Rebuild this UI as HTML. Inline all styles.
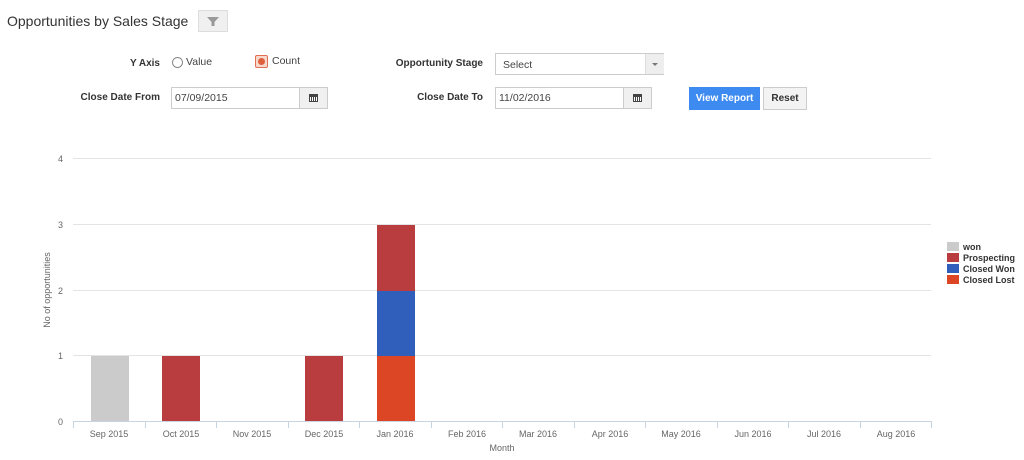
<!DOCTYPE html>
<html><head><style>
body{margin:0;width:1024px;height:460px;background:#fff;font-family:"Liberation Sans",sans-serif;position:relative;overflow:hidden}
.a{position:absolute}
.lbl{font-size:10px;font-weight:bold;color:#333;text-align:right;width:160px}
.inp{position:absolute;border:1px solid #ccc;box-sizing:border-box;height:22px;font-size:10.5px;color:#444;padding:4px 3px;background:#fff}
.cal{position:absolute;border:1px solid #ccc;box-sizing:border-box;height:22px;background:#f0f0f0;width:29px}
.cal:after{content:"";position:absolute;left:9px;top:6px;width:9px;height:8px;border:1px solid #444;border-top:3px solid #444;box-sizing:border-box;background:repeating-linear-gradient(90deg,#fff 0 1px,#444 1px 2px)}
</style></head><body>
<div class="a" style="left:7px;top:13px;font-size:14px;color:#333">Opportunities by Sales Stage</div>
<div class="a" style="left:198px;top:10px;width:30px;height:22px;background:#f0f0f0;border:1px solid #ddd;box-sizing:border-box">
<svg width="30" height="22" style="position:absolute;left:-1px;top:-1px"><path d="M9 7h12l-4.5 5v4h-3v-4z" fill="#999"/></svg></div>
<div class="a lbl" style="left:0;top:58px">Y Axis</div>
<div class="a" style="left:172px;top:57px;width:9px;height:9px;border:1px solid #888;border-radius:50%"></div>
<div class="a" style="left:186px;top:56px;font-size:10.5px;color:#444">Value</div>
<div class="a" style="left:255px;top:55px;width:13px;height:13px;background:#f6d8cc;border:1px solid #e07050;border-radius:2px;box-sizing:border-box"><div style="position:absolute;left:2px;top:2px;width:7px;height:7px;border-radius:50%;background:#e0603e"></div></div>
<div class="a" style="left:272px;top:55px;font-size:10.5px;color:#444">Count</div>
<div class="a lbl" style="left:323px;top:58px">Opportunity Stage</div>
<div class="inp" style="left:495px;top:53px;width:169px;height:22px;padding:5px 7px">Select</div>
<div class="a" style="left:645px;top:54px;width:18px;height:20px;background:#eee;border-left:1px solid #ddd"><div style="position:absolute;left:6px;top:9px;border:3px solid transparent;border-top:3px solid #777"></div></div>
<div class="a lbl" style="left:0;top:92px">Close Date From</div>
<div class="inp" style="left:171px;top:87px;width:130px">07/09/2015</div>
<div class="cal" style="left:299px;top:87px"></div>
<div class="a lbl" style="left:323px;top:92px">Close Date To</div>
<div class="inp" style="left:495px;top:87px;width:130px">11/02/2016</div>
<div class="cal" style="left:623px;top:87px"></div>
<div class="a" style="left:689px;top:87px;width:71px;height:23px;background:#3d8bf0;color:#fff;font-size:10px;font-weight:bold;text-align:center;line-height:23px">View Report</div>
<div class="a" style="left:763px;top:87px;width:44px;height:23px;background:#f3f3f3;border:1px solid #ccc;box-sizing:border-box;color:#333;font-size:10px;font-weight:bold;text-align:center;line-height:21px">Reset</div>
<svg class="a" style="left:0;top:0" width="1024" height="460" font-family="Liberation Sans,sans-serif">
<g stroke="#e4e4e4"><line x1="73" x2="931" y1="158.5" y2="158.5"/><line x1="73" x2="931" y1="224.5" y2="224.5"/><line x1="73" x2="931" y1="290.5" y2="290.5"/><line x1="73" x2="931" y1="355.5" y2="355.5"/></g>
<line x1="73" x2="931" y1="421.5" y2="421.5" stroke="#c8d4e0"/>
<g stroke="#c8d4e0">
<line x1="73.5" x2="73.5" y1="421" y2="428"/><line x1="145.5" x2="145.5" y1="421" y2="428"/><line x1="216.5" x2="216.5" y1="421" y2="428"/><line x1="288.5" x2="288.5" y1="421" y2="428"/><line x1="359.5" x2="359.5" y1="421" y2="428"/><line x1="431.5" x2="431.5" y1="421" y2="428"/><line x1="502.5" x2="502.5" y1="421" y2="428"/><line x1="574.5" x2="574.5" y1="421" y2="428"/><line x1="645.5" x2="645.5" y1="421" y2="428"/><line x1="717.5" x2="717.5" y1="421" y2="428"/><line x1="788.5" x2="788.5" y1="421" y2="428"/><line x1="860.5" x2="860.5" y1="421" y2="428"/><line x1="931.5" x2="931.5" y1="421" y2="428"/></g>
<g font-size="9" fill="#666" text-anchor="end"><text x="63" y="162">4</text><text x="63" y="228">3</text><text x="63" y="294">2</text><text x="63" y="359">1</text><text x="63" y="425">0</text></g>
<text transform="translate(50,290) rotate(-90)" font-size="9" fill="#666" text-anchor="middle">No of opportunities</text>
<g font-size="9" fill="#666" text-anchor="middle">
<text x="109" y="437">Sep 2015</text><text x="181" y="437">Oct 2015</text><text x="252" y="437">Nov 2015</text><text x="324" y="437">Dec 2015</text><text x="395" y="437">Jan 2016</text><text x="467" y="437">Feb 2016</text><text x="538" y="437">Mar 2016</text><text x="610" y="437">Apr 2016</text><text x="681" y="437">May 2016</text><text x="753" y="437">Jun 2016</text><text x="824" y="437">Jul 2016</text><text x="896" y="437">Aug 2016</text>
<text x="502" y="451">Month</text></g>
<rect x="91" y="356" width="38" height="65" fill="#cbcbcb"/>
<rect x="162" y="356" width="38" height="65" fill="#b93d3f"/>
<rect x="305" y="356" width="38" height="65" fill="#b93d3f"/>
<rect x="377" y="356" width="38" height="65" fill="#dc4625"/>
<rect x="377" y="291" width="38" height="65" fill="#2f5ebb"/>
<rect x="377" y="225" width="38" height="66" fill="#b93d3f"/>
<g font-size="9" font-weight="bold" fill="#333">
<rect x="947" y="242" width="12" height="9" fill="#cbcbcb"/><text x="963" y="250">won</text>
<rect x="947" y="253" width="12" height="9" fill="#b93d3f"/><text x="963" y="261">Prospecting</text>
<rect x="947" y="264" width="12" height="9" fill="#2f5ebb"/><text x="963" y="272">Closed Won</text>
<rect x="947" y="275" width="12" height="9" fill="#dc4625"/><text x="963" y="283">Closed Lost</text></g>
</svg>
</body></html>
